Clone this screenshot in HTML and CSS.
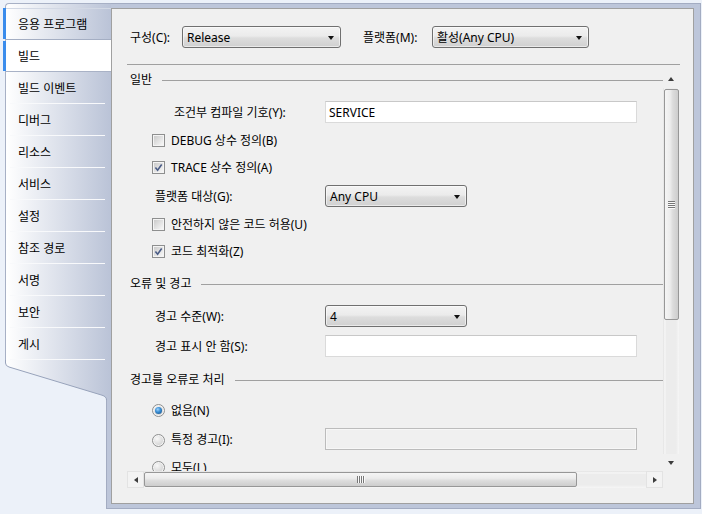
FILE: index.html
```html
<!DOCTYPE html>
<html lang="ko">
<head>
<meta charset="utf-8">
<title>빌드</title>
<link rel="stylesheet" href="styles.css">
</head>
<body>
<div class="frame">
  <nav class="tabs">
    <ul class="tab-list">
      <li class="tab hot">응용 프로그램</li>
      <li class="tab active">빌드</li>
      <li class="tab">빌드 이벤트</li>
      <li class="tab">디버그</li>
      <li class="tab">리소스</li>
      <li class="tab">서비스</li>
      <li class="tab">설정</li>
      <li class="tab">참조 경로</li>
      <li class="tab">서명</li>
      <li class="tab">보안</li>
      <li class="tab">게시</li>
    </ul>
    <svg class="tab-foot" viewBox="0 0 106 40" width="106" height="40">
      <defs>
        <linearGradient id="tg" x1="0" x2="1" y1="0" y2="0">
          <stop offset="0" stop-color="#ffffff"/>
          <stop offset="1" stop-color="#bac3d7"/>
        </linearGradient>
      </defs>
      <path d="M0 0H106V40H101.5Q101.5 36.5 97 35.2L4 7Q0.5 6 0.5 3V0Z" fill="url(#tg)"/>
      <path d="M0.5 0V3Q0.5 6 4 7L97 35.2Q101.5 36.5 101.5 40" fill="none" stroke="#98a3bb"/>
    </svg>
  </nav>

  <section class="panel">
    <div class="panel-inner">
      <div class="toolbar">
        <span class="cfg-label">구성(C):</span>
        <span class="combo cfg">Release</span>
        <span class="cfg-label plat">플랫폼(M):</span>
        <span class="combo plat-combo">활성(Any CPU)</span>
      </div>
      <div class="rule"></div>

      <div class="scroller">
        <div class="viewport">
          <div class="form">
            <div class="group-title">일반</div>
            <div class="field">
              <span class="field-label deep">조건부 컴파일 기호(Y):</span>
              <span class="textbox">SERVICE</span>
            </div>
            <div class="check"><span class="box"></span>DEBUG 상수 정의(B)</div>
            <div class="check"><span class="box"><svg viewBox="0 0 9 9" width="9" height="9"><path d="M1.4 4.6 3.6 7.2 7.7 1.5" fill="none" stroke="#4a5c86" stroke-width="1.6"/></svg></span>TRACE 상수 정의(A)</div>
            <div class="field">
              <span class="field-label">플랫폼 대상(G):</span>
              <span class="combo narrow">Any CPU</span>
            </div>
            <div class="check"><span class="box"></span>안전하지 않은 코드 허용(U)</div>
            <div class="check"><span class="box"><svg viewBox="0 0 9 9" width="9" height="9"><path d="M1.4 4.6 3.6 7.2 7.7 1.5" fill="none" stroke="#4a5c86" stroke-width="1.6"/></svg></span>코드 최적화(Z)</div>

            <div class="group-title">오류 및 경고</div>
            <div class="field">
              <span class="field-label">경고 수준(W):</span>
              <span class="combo narrow">4</span>
            </div>
            <div class="field">
              <span class="field-label">경고 표시 안 함(S):</span>
              <span class="textbox"></span>
            </div>

            <div class="group-title">경고를 오류로 처리</div>
            <div class="check"><span class="box radio"><span class="dot"></span></span>없음(N)</div>
            <div class="field">
              <span class="field-label opt"><span class="box radio"></span>특정 경고(I):</span>
              <span class="textbox disabled"></span>
            </div>
            <div class="check"><span class="box radio"></span>모두(L)</div>
          </div>
        </div>

        <div class="vscroll">
          <span class="sb-btn"><span class="arrow-up"></span></span>
          <span class="vthumb"><span class="grip-v"></span></span>
          <span class="sb-fill"></span>
          <span class="sb-btn down"><span class="arrow-down"></span></span>
        </div>
        <div class="hscroll">
          <span class="sb-btn h"><span class="arrow-left"></span></span>
          <span class="hthumb"><span class="grip-h"></span></span>
          <span class="sb-fill"></span>
          <span class="sb-btn h"><span class="arrow-right"></span></span>
        </div>
        <div class="corner"></div>
      </div>
    </div>
  </section>
</div>
</body>
</html>
```

FILE: styles.css
```css
* { box-sizing: border-box; }

body {
  margin: 0;
  width: 702px;
  height: 514px;
  overflow: hidden;
  background: #ecf1f9;
  font-family: "Noto Sans", "Noto Sans CJK KR", sans-serif;
  font-size: 12px;
  line-height: 16px;
  color: #000;
}

.frame {
  display: flex;
  align-items: flex-start;
  margin: 3px 0 0 5px;
  width: 696px;
}

/* ---------- left tab strip ---------- */
.tabs {
  width: 106px;
  flex: none;
  margin-right: -5px;
  position: relative;
  z-index: 1;
  display: flex;
  flex-direction: column;
}

.tab-list {
  list-style: none;
  margin: 0;
  padding: 4px 0 0;
  border-top: 1px solid #a7b0c5;
  border-left: 1px solid #a7b0c5;
  border-top-left-radius: 4px;
  background: linear-gradient(to right, #ffffff, #bac3d7);
}

.tab {
  position: relative;
  height: 32px;
  padding: 2px 0 1px 12px;
  display: flex;
  align-items: center;
  white-space: nowrap;
  background: linear-gradient(#f8f9fb, #f8f9fb) no-repeat 4px 100% / 95px 1px;
}

.tab.hot {
  background: none;
  padding-bottom: 0;
  border-bottom: 1px solid #a4aec3;
  box-shadow: inset 0 1px 0 #d2d8e4;
}

.tab.active {
  background: #fff;
  padding-bottom: 0;
  border-bottom: 1px solid #a9b2c6;
}

.tab.hot::before,
.tab.active::before {
  content: "";
  position: absolute;
  left: -3px;
  top: 0;
  bottom: 0;
  width: 3px;
  background: #3a8cec;
}

.tab.active::before { top: 1px; }

.tab-foot {
  display: block;
  width: 106px;
  height: 40px;
}

/* ---------- main panel ---------- */
.panel {
  flex: 1;
  height: 506px;
  border: 1px solid #a3acc2;
  background: #bdc6da;
  padding: 4px 6px 4px 4px;
}

.panel-inner {
  height: 100%;
  border: 1px solid #a0a0a0;
  background: #f0f0f0;
  display: flex;
  flex-direction: column;
}

.toolbar {
  display: flex;
  align-items: center;
  height: 22px;
  margin: 17px 0 0 18px;
}

.cfg-label { width: 52px; flex: none; padding-top: 2px; }
.cfg-label.plat { width: 69px; margin-left: 22px; }

.combo {
  height: 22px;
  border: 1px solid #707070;
  border-radius: 3px;
  background: linear-gradient(#f3f3f3, #ebebeb 45%, #dddddd 55%, #d0d0d0);
  box-shadow: inset 0 0 0 1px rgba(255, 255, 255, 0.55);
  padding: 2px 6px 0 4px;
  display: flex;
  align-items: center;
  justify-content: space-between;
  flex: none;
}

.combo::after {
  content: "";
  border-left: 3.5px solid transparent;
  border-right: 3.5px solid transparent;
  border-top: 4px solid #111;
}

.combo.cfg { width: 159px; }
.combo.plat-combo { width: 157px; }
.combo.narrow { width: 142px; }

.rule {
  height: 1px;
  background: #a0a0a0;
  margin: 16px 13px 0 15px;
}

/* ---------- scroll region ---------- */
.scroller {
  margin: 5px 13px 0 15px;
  display: grid;
  grid-template-columns: 536px 16px;
  grid-template-rows: 401px 17px;
}

.viewport {
  grid-column: 1;
  grid-row: 1;
  overflow: hidden;
}

.form {
  width: 536px;
  padding-top: 2px;
}

.group-title {
  display: flex;
  align-items: center;
  height: 16px;
  padding-left: 3px;
  margin: 11px 0 9px;
  white-space: nowrap;
}

.group-title:first-child { margin-top: 0; }

.group-title::after {
  content: "";
  flex: 1;
  height: 1px;
  background: #a0a0a0;
  margin-left: 10px;
}

.field {
  display: flex;
  align-items: center;
  height: 30px;
}

.field-label {
  width: 198px;
  flex: none;
  padding: 2px 0 0 28px;
  white-space: nowrap;
}

.field-label.deep { padding-left: 47px; }

.field-label.opt {
  padding-left: 25px;
  display: flex;
  align-items: center;
  gap: 6px;
}

.textbox {
  width: 312px;
  height: 22px;
  background: #fff;
  border: 1px solid #dadada;
  border-top-color: #c8c8c8;
  padding: 1px 0 0 3px;
  display: flex;
  align-items: center;
  flex: none;
}

.textbox.disabled {
  background: #f0f0f0;
  border-color: #bcbcbc;
  box-shadow: inset 0 0 0 1px #f7f7f7;
}

.check {
  display: flex;
  align-items: center;
  gap: 6px;
  height: 27px;
  padding-left: 25px;
  white-space: nowrap;
}

.box {
  width: 13px;
  height: 13px;
  flex: none;
  border: 1px solid #8e8f8f;
  padding: 1px;
  background: linear-gradient(135deg, #cbcbcb, #f7f7f7) content-box, #f4f4f4;
  display: flex;
  align-items: center;
  justify-content: center;
}

.box svg { display: block; }

.box.radio {
  border-radius: 50%;
  background: radial-gradient(circle at 35% 30%, #f8f8f8, #d4d4d4 80%) content-box, #f4f4f4;
}

.dot {
  width: 7px;
  height: 7px;
  border-radius: 50%;
  background: radial-gradient(circle at 40% 35%, #9fd4ff 0, #3d91d6 40%, #1a5a95 85%);
}

/* ---------- fake scrollbars ---------- */
.vscroll {
  grid-column: 2;
  grid-row: 1;
  display: flex;
  flex-direction: column;
  background: linear-gradient(to right, #e2e2e2, #f8f8f8 2px, #ececec 3px, #ececec 13px, #f6f6f6);
}

.hscroll {
  grid-column: 1;
  grid-row: 2;
  display: flex;
  align-items: center;
  background: linear-gradient(#e2e2e2, #f8f8f8 2px, #ececec 3px, #ececec 14px, #f6f6f6);
}

.corner {
  grid-column: 2;
  grid-row: 2;
  background: #f0f0f0;
}

.sb-btn {
  height: 18px;
  width: 16px;
  flex: none;
  display: flex;
  align-items: center;
  justify-content: center;
  background: #f0f0f0;
}

.sb-btn.down { height: 17px; }

.sb-btn.h {
  width: 17px;
  height: 17px;
  background: #f3f3f3;
  border: 1px solid #e3e3e3;
}

.sb-fill { flex: 1; }

.arrow-up {
  border-left: 3.5px solid transparent;
  border-right: 3.5px solid transparent;
  border-bottom: 4px solid #3c3c3c;
}

.arrow-down {
  border-left: 3.5px solid transparent;
  border-right: 3.5px solid transparent;
  border-top: 4px solid #3c3c3c;
}

.arrow-left {
  border-top: 3.5px solid transparent;
  border-bottom: 3.5px solid transparent;
  border-right: 4px solid #3c3c3c;
}

.arrow-right {
  border-top: 3.5px solid transparent;
  border-bottom: 3.5px solid transparent;
  border-left: 4px solid #3c3c3c;
}

.vthumb {
  align-self: flex-end;
  width: 15px;
  height: 231px;
  margin-top: 1px;
  flex: none;
  border: 1px solid #979797;
  border-radius: 2px;
  background: linear-gradient(to right, #f5f5f5, #ececec 40%, #dcdcdc 60%, #cdcdcd);
  display: flex;
  align-items: center;
  justify-content: center;
}

.grip-v {
  width: 7px;
  height: 8px;
  background: repeating-linear-gradient(#777 0 1px, #fafafa 1px 2px);
}

.hthumb {
  width: 433px;
  height: 15px;
  flex: none;
  border: 1px solid #979797;
  border-radius: 2px;
  background: linear-gradient(#f5f5f5, #ececec 40%, #dcdcdc 60%, #cdcdcd);
  display: flex;
  align-items: center;
  justify-content: center;
}

.grip-h {
  width: 8px;
  height: 7px;
  background: repeating-linear-gradient(to right, #777 0 1px, #fafafa 1px 2px);
}
```
